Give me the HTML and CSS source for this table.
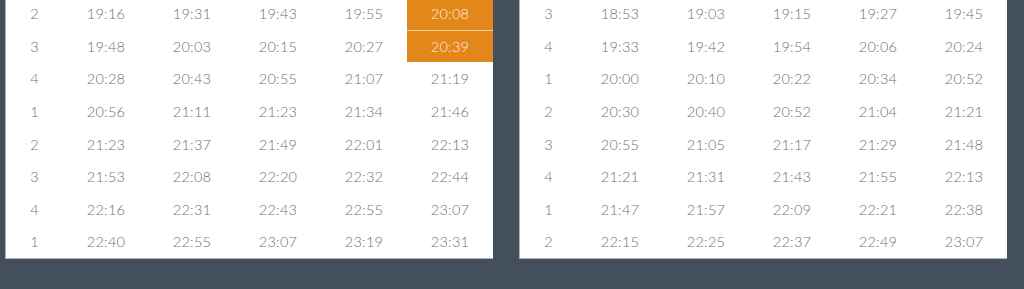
FILE: index.html
```html
<!DOCTYPE html>
<html>
<head>
<meta charset="utf-8">
<link rel="stylesheet" href="styles.css">
</head>
<body>
<div class="boards">
  <div class="panel">
    <div class="row"><span class="c">2</span><span class="c">19:16</span><span class="c">19:31</span><span class="c">19:43</span><span class="c">19:55</span><span class="c hl">20:08</span></div>
    <div class="row"><span class="c">3</span><span class="c">19:48</span><span class="c">20:03</span><span class="c">20:15</span><span class="c">20:27</span><span class="c hl">20:39</span></div>
    <div class="row"><span class="c">4</span><span class="c">20:28</span><span class="c">20:43</span><span class="c">20:55</span><span class="c">21:07</span><span class="c">21:19</span></div>
    <div class="row"><span class="c">1</span><span class="c">20:56</span><span class="c">21:11</span><span class="c">21:23</span><span class="c">21:34</span><span class="c">21:46</span></div>
    <div class="row"><span class="c">2</span><span class="c">21:23</span><span class="c">21:37</span><span class="c">21:49</span><span class="c">22:01</span><span class="c">22:13</span></div>
    <div class="row"><span class="c">3</span><span class="c">21:53</span><span class="c">22:08</span><span class="c">22:20</span><span class="c">22:32</span><span class="c">22:44</span></div>
    <div class="row"><span class="c">4</span><span class="c">22:16</span><span class="c">22:31</span><span class="c">22:43</span><span class="c">22:55</span><span class="c">23:07</span></div>
    <div class="row"><span class="c">1</span><span class="c">22:40</span><span class="c">22:55</span><span class="c">23:07</span><span class="c">23:19</span><span class="c">23:31</span></div>
  </div>
  <div class="panel">
    <div class="row"><span class="c">3</span><span class="c">18:53</span><span class="c">19:03</span><span class="c">19:15</span><span class="c">19:27</span><span class="c">19:45</span></div>
    <div class="row"><span class="c">4</span><span class="c">19:33</span><span class="c">19:42</span><span class="c">19:54</span><span class="c">20:06</span><span class="c">20:24</span></div>
    <div class="row"><span class="c">1</span><span class="c">20:00</span><span class="c">20:10</span><span class="c">20:22</span><span class="c">20:34</span><span class="c">20:52</span></div>
    <div class="row"><span class="c">2</span><span class="c">20:30</span><span class="c">20:40</span><span class="c">20:52</span><span class="c">21:04</span><span class="c">21:21</span></div>
    <div class="row"><span class="c">3</span><span class="c">20:55</span><span class="c">21:05</span><span class="c">21:17</span><span class="c">21:29</span><span class="c">21:48</span></div>
    <div class="row"><span class="c">4</span><span class="c">21:21</span><span class="c">21:31</span><span class="c">21:43</span><span class="c">21:55</span><span class="c">22:13</span></div>
    <div class="row"><span class="c">1</span><span class="c">21:47</span><span class="c">21:57</span><span class="c">22:09</span><span class="c">22:21</span><span class="c">22:38</span></div>
    <div class="row"><span class="c">2</span><span class="c">22:15</span><span class="c">22:25</span><span class="c">22:37</span><span class="c">22:49</span><span class="c">23:07</span></div>
  </div>
</div>
</body>
</html>
```
FILE: styles.css
```css
html, body {
  margin: 0;
  padding: 0;
  background: #434f5b;
  overflow: hidden;
}
.boards {
  display: flex;
  gap: 27px;
  padding-left: 6px;
  margin-top: -3px;
  font-family: Lato, "Liberation Sans", sans-serif;
  font-weight: 300;
  font-size: 14.5px;
  letter-spacing: 0.3px;
  color: #6c7075;
}
.panel {
  width: 487px;
  background: #fff;
  border-bottom: 1px solid #aeb3b8;
  box-shadow: -1px 0 0 #aeb3b8;
}
.row {
  display: grid;
  grid-template-columns: 57px repeat(5, 86px);
  height: 32.6px;
}
.c {
  display: flex;
  align-items: center;
  justify-content: center;
  border-top: 1px solid transparent;
}
.hl {
  background: #e4871a;
  color: #fdf0e2;
  border-top-color: rgba(255, 255, 255, 0.55);
}
```
